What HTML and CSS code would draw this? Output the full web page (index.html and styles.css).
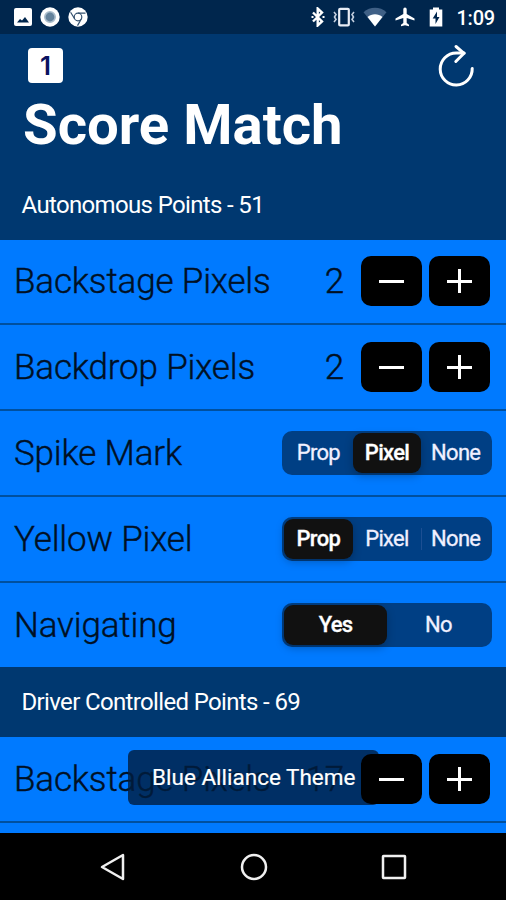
FILE: index.html
```
<!DOCTYPE html>
<html lang="en">

<head>
    <meta charset="UTF-8">
    <meta name="viewport" content="width=device-width, initial-scale=1.0">
    <title>Score Match</title>
    <link rel="stylesheet" href="styles.css">
</head>

<body>
    <!-- Status bar -->
    <div class="statusbar">
        <div class="status-left">
            <svg width="18" height="18" viewBox="0 0 18 18">
                <rect width="18" height="18" rx="2" fill="#fff" />
                <path d="M3 14.5l3-3.5 2 1.5 3-3.5 4 5.5z" fill="#00264d" />
            </svg>
            <svg width="20" height="20" viewBox="0 0 20 20">
                <circle cx="10" cy="10" r="9.7" fill="#fff" />
                <circle cx="10" cy="10" r="5.2" fill="#64829b" stroke="#a9bccb" stroke-width="1.6" />
            </svg>
            <svg width="20" height="20" viewBox="0 0 20 20">
                <circle cx="10" cy="10" r="9.7" fill="#fff" />
                <circle cx="10" cy="10" r="3.8" fill="none" stroke="#33506e" stroke-width="1.2" />
                <path d="M10 6.1h7.5M6.6 11.8L2.6 5.2M13.3 12l-3.8 6.6" fill="none" stroke="#33506e" stroke-width="1.2" />
            </svg>
        </div>
        <div class="status-right">
            <svg class="bluetooth" width="14" height="20" viewBox="0 0 14 20">
                <path d="M2 5.5l9 9-4.3 4V1.5l4.3 4-9 9" fill="none" stroke="#fff" stroke-width="2.4" />
                <path d="M.5 10h2M11.5 10h2" stroke="#fff" stroke-width="2" />
            </svg>
            <svg class="vibrate" width="22" height="20" viewBox="0 0 22 20">
                <rect x="6.2" y="1.8" width="9.6" height="16.6" rx="1" fill="none" stroke="#e8edf5" stroke-width="2.2" />
                <path d="M1 5l2 2.5-1.5 2.5L3 12.5l-2 2.5M21 5l-2 2.5 1.5 2.5-1.5 2.5 2 2.5" fill="none" stroke="#c4d0e0" stroke-width="1.6" />
            </svg>
            <svg class="wifi" width="24" height="20" viewBox="0 0 24 20">
                <path d="M12 19.5L.5 5.2C7-.6 17-.6 23.5 5.2z" fill="#3f6086" />
                <path d="M12 19.5L4.5 10c4.3-3.8 10.7-3.8 15 0z" fill="#fff" />
            </svg>
            <svg class="plane" width="20" height="20" viewBox="0 0 20 20">
                <path d="M19.5 13.5v-2L11.7 7V2.2a1.7 1.7 0 0 0-3.4 0V7L.5 11.5v2l7.8-2.4v5L6 17.7v1.6l4-1.1 4 1.1v-1.6l-2.3-1.6v-5z" fill="#fff" />
            </svg>
            <svg class="battery" width="14" height="20" viewBox="0 0 14 20">
                <path d="M4 .5h6v2h3.3v17H.7v-17H4z" fill="#fff" />
                <path d="M8 4.5L3.7 11.5H6.5V17l4-7H8z" fill="#00264d" />
            </svg>
            <span class="time">1:09</span>
        </div>
    </div>

    <!-- Header -->
    <div class="header">
        <div class="toolbar">
            <div class="match-badge">1</div>
            <svg class="reset" width="38" height="44" viewBox="0 0 38 44">
                <path d="M35.2 25.5a16 16 0 1 1-16-15.5h8" fill="none" stroke="#fff" stroke-width="3" stroke-linecap="round" />
                <path d="M19 3.5l8 6.8-8.2 8.2" fill="none" stroke="#fff" stroke-width="3" stroke-linecap="round" stroke-linejoin="round" />
            </svg>
        </div>
        <h1>Score Match</h1>
    </div>

    <div class="section-title">Autonomous Points - 51</div>
    <div class="row">
        <span class="label">Backstage Pixels</span>
        <span class="count">2</span>
        <div class="stepper">
            <button class="step minus"></button>
            <button class="step plus"></button>
        </div>
    </div>
    <div class="row">
        <span class="label">Backdrop Pixels</span>
        <span class="count">2</span>
        <div class="stepper">
            <button class="step minus"></button>
            <button class="step plus"></button>
        </div>
    </div>
    <div class="row">
        <span class="label">Spike Mark</span>
        <div class="segmented">
            <div class="segment">Prop</div>
            <div class="segment active">Pixel</div>
            <div class="segment">None</div>
        </div>
    </div>
    <div class="row">
        <span class="label">Yellow Pixel</span>
        <div class="segmented">
            <div class="segment active">Prop</div>
            <div class="segment">Pixel</div>
            <div class="segment divided">None</div>
        </div>
    </div>
    <div class="row last">
        <span class="label">Navigating</span>
        <div class="segmented">
            <div class="segment active">Yes</div>
            <div class="segment">No</div>
        </div>
    </div>

    <div class="section-title">Driver Controlled Points - 69</div>
    <div class="row">
        <span class="label">Backstage Pixels</span>
        <span class="count">17</span>
        <div class="toast">Blue Alliance Theme</div>
        <div class="stepper">
            <button class="step minus"></button>
            <button class="step plus"></button>
        </div>
    </div>
    <div class="next-row"></div>

    <!-- Android navigation -->
    <div class="navbar">
        <svg width="28" height="28" viewBox="0 0 28 28">
            <path d="M24 2v24L3 14z" fill="none" stroke="#f0f0f0" stroke-width="2.5" stroke-linejoin="round" />
        </svg>
        <svg width="28" height="28" viewBox="0 0 28 28">
            <circle cx="14" cy="14" r="12" fill="none" stroke="#f0f0f0" stroke-width="2.5" />
        </svg>
        <svg width="28" height="28" viewBox="0 0 28 28">
            <rect x="3" y="3" width="22" height="22" rx=".5" fill="none" stroke="#f0f0f0" stroke-width="2.5" />
        </svg>
    </div>
</body>

</html>
```
FILE: styles.css
```
* {
    box-sizing: border-box;
}

body {
    font-family: Roboto, Arial, sans-serif;
    margin: 0;
    height: 900px;
    overflow: hidden;
    display: flex;
    flex-direction: column;
    background-color: #007aff;
    color: white;
}

svg {
    display: block;
    flex: none;
}

/* Status bar */
.statusbar {
    height: 34px;
    flex: none;
    display: flex;
    justify-content: space-between;
    align-items: center;
    padding: 0 11px 0 14px;
    background-color: #00264d;
}

.status-left,
.status-right {
    display: flex;
    align-items: center;
}

.status-left {
    gap: 8px;
}

.vibrate {
    margin-left: 8px;
}

.wifi {
    margin-left: 8px;
}

.plane {
    margin-left: 8px;
}

.battery {
    margin-left: 14px;
}

.time {
    margin-left: 13px;
    padding-top: 2px;
    font-size: 20px;
    font-weight: 500;
    line-height: 34px;
    letter-spacing: -0.2px;
}

/* Header */
.header {
    height: 135.5px;
    flex: none;
    background-color: #003870;
}

.toolbar {
    height: 62px;
    display: flex;
    justify-content: space-between;
    align-items: center;
    padding: 0 31px 0 28px;
}

.match-badge {
    width: 35px;
    height: 35px;
    border-radius: 4px;
    background-color: white;
    color: #0a1260;
    font-family: Inter, sans-serif;
    font-size: 26px;
    font-weight: 600;
    line-height: 35px;
    text-align: center;
}

h1 {
    margin: 0;
    padding-left: 23px;
    font-size: 56.3px;
    font-weight: 700;
    line-height: 59px;
    white-space: nowrap;
}

.section-title {
    height: 70px;
    flex: none;
    padding-left: 21.5px;
    background-color: #003870;
    font-size: 24px;
    line-height: 70px;
    letter-spacing: -0.65px;
}

/* Rows */
.row {
    position: relative;
    height: 85.9px;
    flex: none;
    display: flex;
    align-items: center;
    padding: 0 14px 0 14px;
    border-bottom: 2px solid #00509f;
    color: #001024;
}

.row.last {
    height: 84.4px;
    border-bottom: none;
}

.label,
.count {
    font-size: 35px;
    font-weight: 300;
    letter-spacing: -0.15px;
    white-space: nowrap;
    -webkit-text-stroke: 0.4px;
}

.label {
    flex: 1;
}

.count {
    margin-right: 17px;
}

.stepper {
    position: relative;
    display: flex;
    gap: 7px;
    margin-right: 2px;
}

.step {
    width: 61px;
    height: 50px;
    padding: 0;
    border: none;
    border-radius: 10px;
    background: linear-gradient(white, white) center / 25px 3px no-repeat black;
}

.plus {
    background: linear-gradient(white, white) center / 25px 3px no-repeat, linear-gradient(white, white) center / 3px 24px no-repeat, black;
}

.segmented {
    width: 210px;
    height: 44px;
    display: flex;
    padding: 2px;
    border-radius: 10px;
    background-color: #003f84;
}

.segment {
    flex: 1;
    border-radius: 9px;
    color: #f0f0ff;
    font-size: 22px;
    line-height: 40px;
    text-align: center;
    letter-spacing: -0.7px;
    -webkit-text-stroke: 0.3px;
}

.segment.active {
    background-color: #111;
    color: white;
    font-weight: 500;
    box-shadow: 0 3px 8px rgba(0, 0, 0, 0.25);
}

.segment.divided {
    border-radius: 0;
    background: linear-gradient(#1c4f93, #1c4f93) left center / 1px 22px no-repeat;
}

/* Toast lies over the row text */
.toast {
    position: absolute;
    left: 128px;
    top: 13px;
    width: 251px;
    height: 55px;
    padding-left: 24px;
    border-radius: 6px;
    background-color: rgba(0, 29, 62, 0.8);
    color: white;
    font-size: 22.5px;
    line-height: 55px;
    white-space: nowrap;
    -webkit-text-stroke: 0.2px;
}

.next-row {
    flex: 1;
}

.navbar {
    height: 67px;
    flex: none;
    display: flex;
    justify-content: center;
    align-items: center;
    gap: 112.5px;
    padding-left: 1px;
    background-color: black;
}
```
